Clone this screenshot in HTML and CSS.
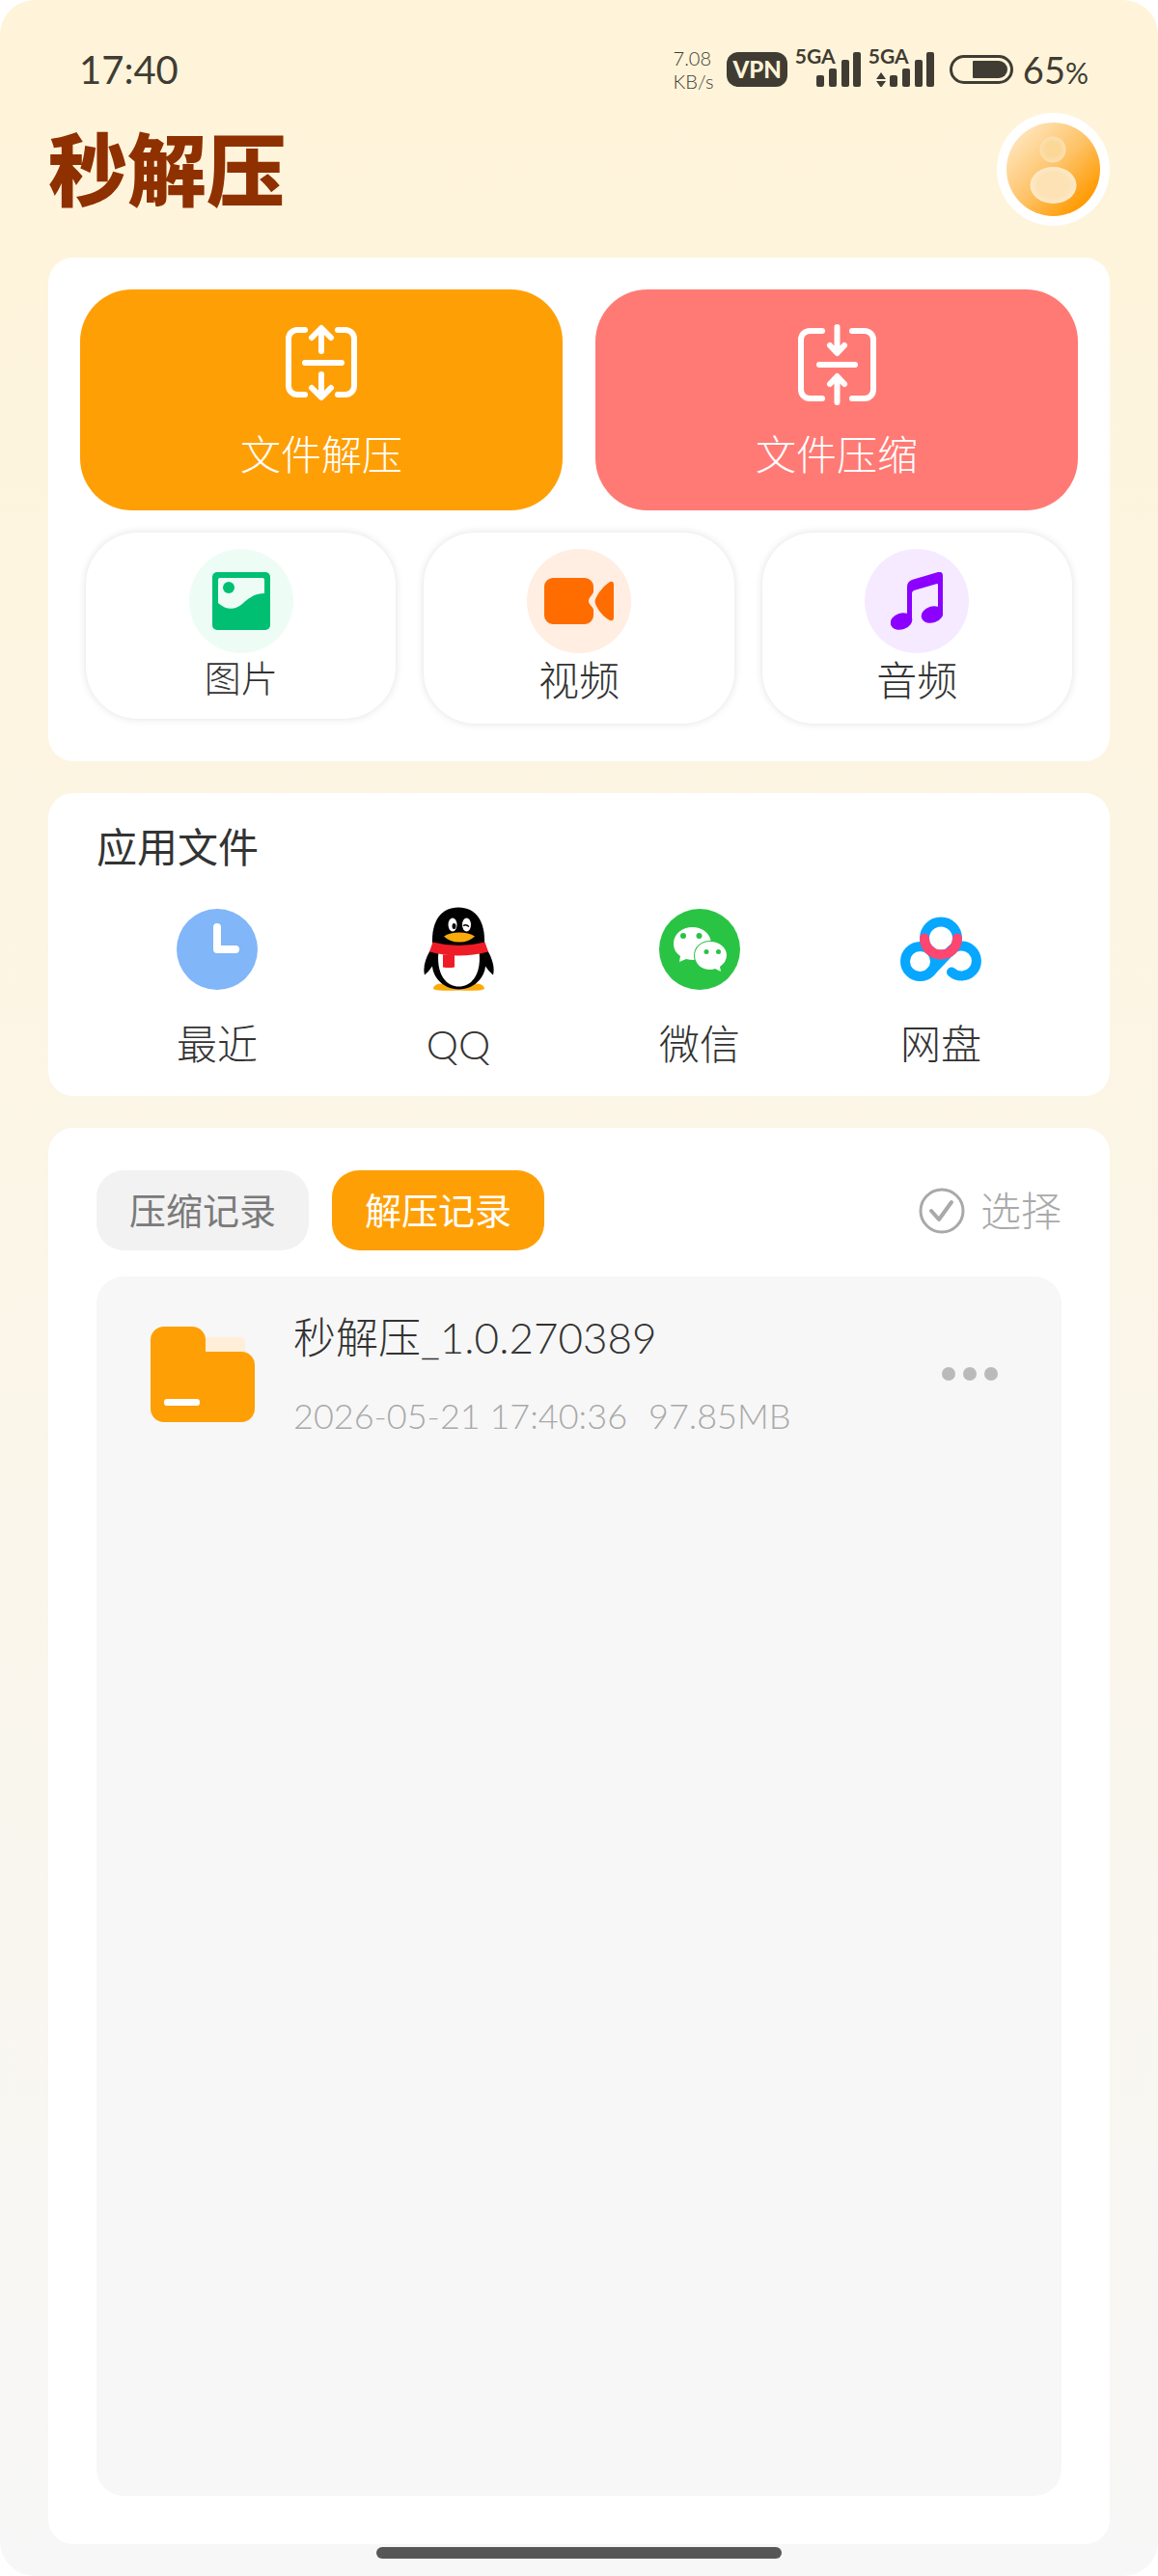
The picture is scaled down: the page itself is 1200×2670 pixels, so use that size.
FILE: index.html
```html
<!DOCTYPE html>
<html lang="zh-CN">
<head>
  <meta charset="UTF-8" />
  <meta name="viewport" content="width=device-width, initial-scale=1.0" />
  <title>秒解压</title>
  <link rel="stylesheet" href="styles.css">
</head>
<body>
  <div class="status-bar">
    <span class="time">17:40</span>
    <div class="status-icons">
      <div class="net-speed">
        <span>7.08</span>
        <span>KB/s</span>
      </div>
      <span class="vpn">VPN</span>
      <div class="signal">
        <span class="network">5GA</span>
        <svg width="68" height="36" viewBox="0 0 68 36" fill="currentColor">
          <rect x="22" y="24" width="8" height="12" rx="2"/>
          <rect x="35" y="17" width="8" height="19" rx="2"/>
          <rect x="48" y="8" width="8" height="28" rx="2"/>
          <rect x="60" y="0" width="8" height="36" rx="2"/>
        </svg>
      </div>
      <div class="signal">
        <span class="network">5GA</span>
        <svg width="68" height="36" viewBox="0 0 68 36" fill="currentColor">
          <path d="M13 21l5 7H8zM13 37l5-7H8z"/>
          <rect x="22" y="24" width="8" height="12" rx="2"/>
          <rect x="35" y="17" width="8" height="19" rx="2"/>
          <rect x="48" y="8" width="8" height="28" rx="2"/>
          <rect x="60" y="0" width="8" height="36" rx="2"/>
        </svg>
      </div>
      <svg class="battery" width="66" height="30" viewBox="0 0 66 30">
        <rect x="1.5" y="1.5" width="63" height="27" rx="13.5" fill="none" stroke="currentColor" stroke-width="3"/>
        <path d="M25 6H51a9 9 0 0 1 0 18H25a1 1 0 0 1-1-1V7a1 1 0 0 1 1-1z" fill="currentColor"/>
      </svg>
      <span class="percent">65<small>%</small></span>
    </div>
  </div>

  <header class="header">
    <h1 id="title">秒解压</h1>
    <button class="avatar" aria-label="我的">
      <svg width="97" height="97" viewBox="0 0 97 97">
        <defs>
          <linearGradient id="avatar-bg" x1="0.15" y1="0.15" x2="0.85" y2="0.85">
            <stop offset="0" stop-color="#ffe2b4"/>
            <stop offset="0.5" stop-color="#fec368"/>
            <stop offset="1" stop-color="#ff9a00"/>
          </linearGradient>
          <radialGradient id="avatar-head">
            <stop offset="0.55" stop-color="#fbd898"/>
            <stop offset="1" stop-color="#fce0b0"/>
          </radialGradient>
          <radialGradient id="avatar-body">
            <stop offset="0.7" stop-color="#fde2b6"/>
            <stop offset="1" stop-color="#fdeac9"/>
          </radialGradient>
        </defs>
        <circle cx="48.5" cy="48.5" r="48.5" fill="url(#avatar-bg)"/>
        <circle cx="48" cy="28" r="13.5" fill="url(#avatar-head)"/>
        <ellipse cx="48.5" cy="65" rx="24" ry="19" fill="url(#avatar-body)"/>
      </svg>
    </button>
  </header>

  <main>
    <section class="card tools">
      <div class="main-actions">
        <button class="action unzip">
          <svg width="74" height="80" viewBox="0 0 74 80" class="line-icon">
            <path d="M20 6H12a9 9 0 0 0-9 9V64a9 9 0 0 0 9 9H20M54 6H62a9 9 0 0 1 9 9V64a9 9 0 0 1-9 9H54"/>
            <path d="M37 5V28M27 14L37 4L47 14M20 40H58M37 52V75M27 66L37 76L47 66"/>
          </svg>
          <span>文件解压</span>
        </button>
        <button class="action zip">
          <svg width="81" height="84" viewBox="0 0 81 84" class="line-icon">
            <path d="M25 7H12a9 9 0 0 0-9 9V68a9 9 0 0 0 9 9H25M56 7H69a9 9 0 0 1 9 9V68a9 9 0 0 1-9 9H56"/>
            <path d="M40.5 3V29M33 22L40.5 30L48 22M22 42H59M40.5 81V55M33 62L40.5 54L48 62"/>
          </svg>
          <span>文件压缩</span>
        </button>
      </div>
      <div class="file-types">
        <button class="type">
          <span class="type-icon image">
            <svg width="60" height="60" viewBox="0 0 60 60">
              <rect width="60" height="60" rx="5" fill="#00bf72"/>
              <path d="M8 6H52a2 2 0 0 1 2 2V22C43 22 37 28 31 33C24 39 15 40 6 32V8a2 2 0 0 1 2-2z" fill="#edfdf6"/>
              <circle cx="17" cy="16" r="6" fill="#00bf72"/>
            </svg>
          </span>
          <span class="type-name small">图片</span>
        </button>
        <button class="type">
          <span class="type-icon video">
            <svg width="72" height="48" viewBox="0 0 72 48" fill="#ff6c00">
              <path d="M9 0H42a9 9 0 0 1 9 9V14C51 17 46 20 46 24C46 28 51 30 51 33V39a9 9 0 0 1-9 9H9a9 9 0 0 1-9-9V9a9 9 0 0 1 9-9z"/>
              <path d="M53 22C56 15 62 8 68 4Q72 3 72 7V41Q72 45 68 44C62 41 56 34 53 27Q52 24 53 22z"/>
            </svg>
          </span>
          <span class="type-name">视频</span>
        </button>
        <button class="type">
          <span class="type-icon audio">
            <svg width="54" height="60" viewBox="0 0 54 60" fill="#8b00ff">
              <path d="M17 44V15Q17 10 22 8L49 0Q54-1 54 4V44H49V13Q49 12 48 12L24 19Q22 20 22 22V51H17z"/>
              <ellipse cx="11" cy="51" rx="11.5" ry="8.5" transform="rotate(-18 11 51)"/>
              <ellipse cx="43" cy="44" rx="11.5" ry="8.5" transform="rotate(-18 43 44)"/>
            </svg>
          </span>
          <span class="type-name">音频</span>
        </button>
      </div>
    </section>

    <section class="card apps">
      <h2>应用文件</h2>
      <nav class="app-list">
        <a href="#recent">
          <svg width="84" height="84" viewBox="0 0 84 84">
            <circle cx="42" cy="42" r="42" fill="#81b6f8"/>
            <path d="M42 19V42H61" fill="none" stroke="#fff" stroke-width="8" stroke-linecap="round" stroke-linejoin="round"/>
          </svg>
          <span>最近</span>
        </a>
        <a href="#qq">
          <svg width="73" height="87" viewBox="0 0 73 87">
            <path d="M10 84Q11 79 19 79H54Q62 79 63 84Q63 87 36.500 86Q10 87 10 84z" fill="#faab0c"/>
            <path d="M6.500 45C2 53 -1 62 1 70Q5 67 9 61C10 74 22 85 36.500 85S63 74 64 61Q68 67 72 70C74 62 71 53 66.500 45z"/>
            <path d="M15.500 46H57.500C60 66 52 82 36.500 82S13 66 15.500 46z" fill="#fff"/>
            <path d="M9 38C8 14 18 0 36 0S64 14 63 38Q36 44 9 38z"/>
            <ellipse cx="30" cy="18" rx="4.500" ry="7" fill="#fff"/>
            <ellipse cx="44.500" cy="18" rx="4.500" ry="7" fill="#fff"/>
            <ellipse cx="31.500" cy="19.500" rx="2" ry="3"/>
            <path d="M41 19Q44 17 47 20" fill="none" stroke="#000" stroke-width="1.500"/>
            <path d="M21 30Q27 26 37 26T53 30Q47 36 37 36T21 30z" fill="#faab0c"/>
            <path d="M9.500 36Q36 43 63.500 36L67 46Q36 54 6 46z" fill="#ee1c26"/>
            <path d="M20 49H32V62Q26 63 20 62z" fill="#ee1c26"/>
          </svg>
          <span>QQ</span>
        </a>
        <a href="#wechat">
          <svg width="84" height="84" viewBox="0 0 84 84">
            <circle cx="42" cy="42" r="42" fill="#2ac445"/>
            <path d="M34.500 19C45 19 54 26 54 36S45 53 36 53Q32 53 28 52L21 55L22 49C18 46 15 42 15 36C15 26 24 19 34.500 19z" fill="#fff"/>
            <circle cx="25" cy="28" r="3" fill="#2ac445"/>
            <circle cx="41.500" cy="28" r="3" fill="#2ac445"/>
            <path d="M53 34C62 34 70 40 70 48Q70 55 63 60L64 65L58 62Q56 63 53 63C44 63 37 57 37 48.500S44 34 53 34z" fill="#fff" stroke="#2ac445" stroke-width="2" paint-order="stroke"/>
            <circle cx="49" cy="44.500" r="2.500" fill="#2ac445"/>
            <circle cx="61.500" cy="44.500" r="2.500" fill="#2ac445"/>
          </svg>
          <span>微信</span>
        </a>
        <a href="#netdisk">
          <svg width="84" height="67" viewBox="0 0 84 67" fill="none" stroke="#07a7ff" stroke-width="10" stroke-linecap="round">
            <circle cx="20.500" cy="46" r="15.500"/>
            <path d="M31 57L52 35A15.500 15.500 0 1 1 53 57"/>
            <circle cx="42" cy="22" r="17"/>
            <path d="M25 22A17 17 0 0 0 59 22" stroke="#ff4670"/>
          </svg>
          <span>网盘</span>
        </a>
      </nav>
    </section>

    <section class="card records">
      <div class="records-head">
        <button class="tab">压缩记录</button>
        <button class="tab active">解压记录</button>
        <button class="select">
          <svg width="48" height="48" viewBox="0 0 48 48" fill="none" stroke="currentColor" stroke-linecap="round" stroke-linejoin="round">
            <circle cx="24" cy="24" r="22" stroke-width="3"/>
            <path d="M13 24L21 33L34 15" stroke-width="4"/>
          </svg>
          选择
        </button>
      </div>
      <ul class="record-list">
        <li class="record">
          <svg width="108" height="99" viewBox="0 0 108 99">
            <rect x="50" y="11" width="48" height="30" rx="5" fill="#ffefd9"/>
            <path d="M14 0H43a14 14 0 0 1 14 14V26H94a14 14 0 0 1 14 14V85a14 14 0 0 1-14 14H14a14 14 0 0 1-14-14V14a14 14 0 0 1 14-14z" fill="#ff9f06"/>
            <rect x="14" y="75" width="37" height="7" rx="3" fill="#fff"/>
          </svg>
          <div class="record-info">
            <p class="record-name">秒解压_1.0.270389</p>
            <p class="record-meta"><span>2026-05-21 17:40:36</span><span>97.85MB</span></p>
          </div>
          <button class="more" aria-label="更多">
            <svg width="58" height="14" viewBox="0 0 58 14" fill="#bababa">
              <circle cx="7" cy="7" r="7"/>
              <circle cx="29" cy="7" r="7"/>
              <circle cx="51" cy="7" r="7"/>
            </svg>
          </button>
        </li>
      </ul>
    </section>
  </main>

  <div class="home-bar"></div>
</body>
</html>
```
FILE: styles.css
```css
:root {
  --orange: #ff9f06;
  --red: #ff7a75;
  --text-color: #333;
  --muted: #a9a9a9;
  --status-color: #403c33;
  --panel-bg: #f7f7f7;
}

* {
  box-sizing: border-box;
}

html {
  background-color: #fff;
}

body {
  margin: 0;
  min-height: 100vh;
  display: flex;
  flex-direction: column;
  border-radius: 36px;
  background: linear-gradient(#fff4d9, #f7f7f7);
  font-family: Lato, 'Noto Sans CJK SC', sans-serif;
  font-size: 42px;
  font-weight: 300;
  line-height: 56px;
  color: var(--text-color);
}

h1, h2, p, ul {
  margin: 0;
  padding: 0;
}

button {
  padding: 0;
  border: none;
  background: none;
  font: inherit;
  color: inherit;
  cursor: pointer;
}

svg {
  display: block;
}

/* status bar */
.status-bar {
  display: flex;
  justify-content: space-between;
  align-items: center;
  height: 100px;
  padding: 44px 72px 0 82px;
  color: var(--status-color);
}

.time {
  font-size: 40px;
  font-weight: 400;
}

.status-icons {
  display: flex;
  align-items: center;
  gap: 8px;
}

.net-speed {
  display: flex;
  flex-direction: column;
  margin-right: 6px;
  font-size: 20px;
  line-height: 24px;
}

.vpn {
  padding: 0 6px;
  border-radius: 12px;
  background-color: var(--status-color);
  color: #fff4d9;
  font-size: 24px;
  font-weight: 900;
  line-height: 36px;
}

.signal {
  position: relative;
}

.network {
  position: absolute;
  top: -8px;
  left: 0;
  font-size: 21px;
  font-weight: 700;
  line-height: 24px;
}

.battery {
  margin: 0 2px 0 8px;
}

.percent {
  font-size: 38px;
  font-weight: 400;
}

.percent small {
  font-size: 30px;
  line-height: 30px;
}

/* header */
.header {
  display: flex;
  justify-content: space-between;
  align-items: center;
  padding: 17px 50px 33px;
}

h1 {
  color: #8f3000;
  font-size: 82px;
  font-weight: 900;
  line-height: 117px;
}

.avatar {
  padding: 10px;
  border-radius: 50%;
  background-color: #fff;
}

main {
  flex: 1;
  display: flex;
  flex-direction: column;
  gap: 33px;
  padding: 0 50px;
}

.card {
  border-radius: 26px;
  background-color: #fff;
}

/* tools */
.tools {
  padding: 33px 33px 39px;
}

.main-actions {
  display: grid;
  grid-template-columns: 1fr 1fr;
  gap: 34px;
}

.action {
  display: flex;
  flex-direction: column;
  align-items: center;
  justify-content: space-between;
  height: 229px;
  padding: 36px 0 30px;
  border-radius: 54px;
  color: #fff;
}

.unzip {
  background-color: var(--orange);
}

.zip {
  background-color: var(--red);
}

.line-icon {
  fill: none;
  stroke: #fff;
  stroke-width: 6px;
  stroke-linecap: round;
  stroke-linejoin: round;
}

.file-types {
  display: grid;
  grid-template-columns: repeat(3, 1fr);
  align-items: start;
  gap: 29px;
  padding: 23px 6px 0;
}

.type {
  display: flex;
  flex-direction: column;
  align-items: center;
  padding: 17px 0;
  border-radius: 54px;
  background-color: #fff;
  box-shadow: 0 0 8px rgba(0, 0, 0, 0.12);
}

.type-icon {
  display: flex;
  align-items: center;
  justify-content: center;
  width: 108px;
  height: 108px;
  border-radius: 50%;
}

.image {
  background-color: #edfdf6;
}

.video {
  background-color: #ffeee1;
}

.audio {
  background-color: #f5eaff;
}

.small {
  font-size: 38px;
  line-height: 51px;
}

/* apps */
.apps {
  padding: 28px 50px 26px;
}

h2 {
  font-size: 42px;
  font-weight: 400;
  line-height: 56px;
}

.app-list {
  display: grid;
  grid-template-columns: repeat(4, 1fr);
  padding-top: 32px;
}

.app-list a {
  display: flex;
  flex-direction: column;
  align-items: center;
  justify-content: space-between;
  height: 172px;
  color: inherit;
  text-decoration: none;
}

.app-list svg {
  height: 92px;
}

/* records */
.records {
  flex: 1;
  display: flex;
  flex-direction: column;
  padding: 44px 50px 50px;
}

.records-head {
  display: flex;
  align-items: center;
  gap: 24px;
  padding-bottom: 27px;
}

.tab {
  padding: 0 34px;
  border-radius: 28px;
  background-color: #f2f2f2;
  color: #7a7a7a;
  font-size: 38px;
  font-weight: 400;
  line-height: 83px;
}

.tab.active {
  background-color: var(--orange);
  color: #fff;
}

.select {
  display: flex;
  align-items: center;
  gap: 16px;
  margin-left: auto;
  color: var(--muted);
}

.record-list {
  flex: 1;
  border-radius: 28px;
  background-color: var(--panel-bg);
  list-style: none;
}

.record {
  display: flex;
  align-items: center;
  padding: 33px 66px 31px 56px;
}

.record-info {
  flex: 1;
  margin-left: 40px;
}

.record-name {
  font-size: 44px;
  line-height: 60px;
}

.record-meta {
  display: flex;
  gap: 22px;
  padding-top: 26px;
  color: var(--muted);
  font-size: 36px;
  line-height: 50px;
}

.home-bar {
  align-self: center;
  width: 35%;
  height: 12px;
  margin: 3px 0 18px;
  border-radius: 6px;
  background-color: #575757;
}
```
